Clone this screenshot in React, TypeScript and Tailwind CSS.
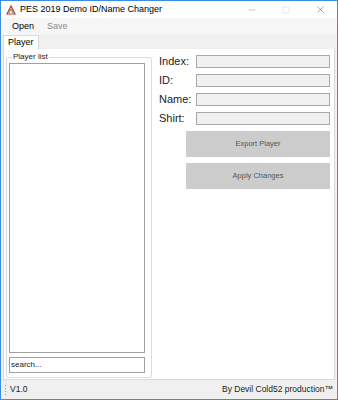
import { Minus, Square, X } from 'lucide-react';

const fields = ['Index:', 'ID:', 'Name:', 'Shirt:'];

function AppIcon() {
  return (
    <svg width="10" height="10" viewBox="0 0 10 10">
      <path d="M1 9 L5 1 L9 9 Z" fill="#ffffff" stroke="#c0392b" strokeWidth="1.2" />
      <path d="M3 8 L5 4 L7 8" fill="none" stroke="#555" strokeWidth="0.8" />
    </svg>
  );
}

export default function App() {
  return (
    <div
      className="w-[338px] h-[400px] flex flex-col border border-[#3d8ee0] bg-white text-black"
      style={{ fontFamily: '"Liberation Sans", Arial, sans-serif' }}
    >
      {/* Title bar */}
      <div className="h-[17px] flex items-center bg-white">
        <div className="w-[19px] flex justify-center pl-[1px]">
          <AppIcon />
        </div>
        <span className="text-[9px] leading-none text-black">PES 2019 Demo ID/Name Changer</span>
        <div className="ml-auto flex items-center h-full">
          <div className="w-[34px] flex justify-center text-[#777]">
            <Minus size={10} strokeWidth={1} />
          </div>
          <div className="w-[34px] flex justify-center text-[#bbb]">
            <Square size={8} strokeWidth={1} />
          </div>
          <div className="w-[34px] flex justify-center text-[#444]">
            <X size={11} strokeWidth={1} />
          </div>
        </div>
      </div>

      {/* Menu bar */}
      <div className="h-[17px] flex items-center bg-[#f6f6f6] text-[9px] leading-none">
        <span className="pl-[11px] pr-[13px]">Open</span>
        <span className="text-[#8a8a8a]">Save</span>
      </div>

      {/* Tab strip */}
      <div className="h-[14px] flex items-end bg-[#f0f0f0] pl-[2px]">
        <div className="h-[14px] px-[4px] flex items-center bg-white border border-b-0 border-[#d9d9d9] text-[9px] leading-none">
          Player
        </div>
      </div>

      {/* Tab page */}
      <div className="flex-1 flex bg-[#f0f0f0] px-[2px]">
        <div className="flex-1 flex bg-white border border-t-0 border-[#d9d9d9] pl-[2px] pr-[3px] pt-[4px] pb-[1px]">
          {/* Player list group */}
          <div className="relative w-[146px] mt-[4px] border border-[#dcdcdc] rounded-[2px] flex flex-col pl-[2px] pr-[6px] pt-[5px] pb-[4px]">
            <span className="absolute -top-[6px] left-[5px] bg-white px-[1px] text-[8px] leading-[10px] text-[#222]">
              Player list
            </span>
            <div className="flex-1 border border-[#a0a0a0] bg-white" />
            <div className="mt-[4px] h-[16px] border border-[#a0a0a0] bg-white flex items-center px-[1px] text-[8px] leading-none">
              <span className="text-[#222]">search...</span>
            </div>
          </div>

          {/* Fields */}
          <div className="flex-1 flex flex-col pl-[7px] pt-[2px]">
            <div className="flex flex-col gap-[6px]">
              {fields.map((f) => (
                <div key={f} className="flex items-center h-[13px]">
                  <span className="w-[37px] text-[11px] leading-none text-[#222]">{f}</span>
                  <div className="w-[134px] h-[13px] border border-[#a8a8a8] bg-[#f0f0f0]" />
                </div>
              ))}
            </div>
            <div className="pl-[27px] pr-[1px] mt-[6px] flex flex-col gap-[6px]">
              <div className="h-[26px] bg-[#cccccc] flex items-center justify-center text-[7.5px] text-[#555]">
                Export Player
              </div>
              <div className="h-[26px] bg-[#cccccc] flex items-center justify-center text-[7.5px] text-[#555]">
                Apply Changes
              </div>
            </div>
          </div>
        </div>
      </div>

      {/* Status bar */}
      <div className="h-[19px] flex items-center bg-[#f0f0f0] text-[8.5px] leading-none">
        <div className="w-[6px] flex flex-col items-center gap-[2px] pl-[2px]">
          <span className="w-[1px] h-[1px] bg-[#999]" />
          <span className="w-[1px] h-[1px] bg-[#999]" />
          <span className="w-[1px] h-[1px] bg-[#999]" />
          <span className="w-[1px] h-[1px] bg-[#999]" />
        </div>
        <span className="pl-[3px] text-[#222]">V1.0</span>
        <span className="ml-auto pr-[4px] text-[#222]">By Devil Cold52 production™</span>
      </div>
    </div>
  );
}
